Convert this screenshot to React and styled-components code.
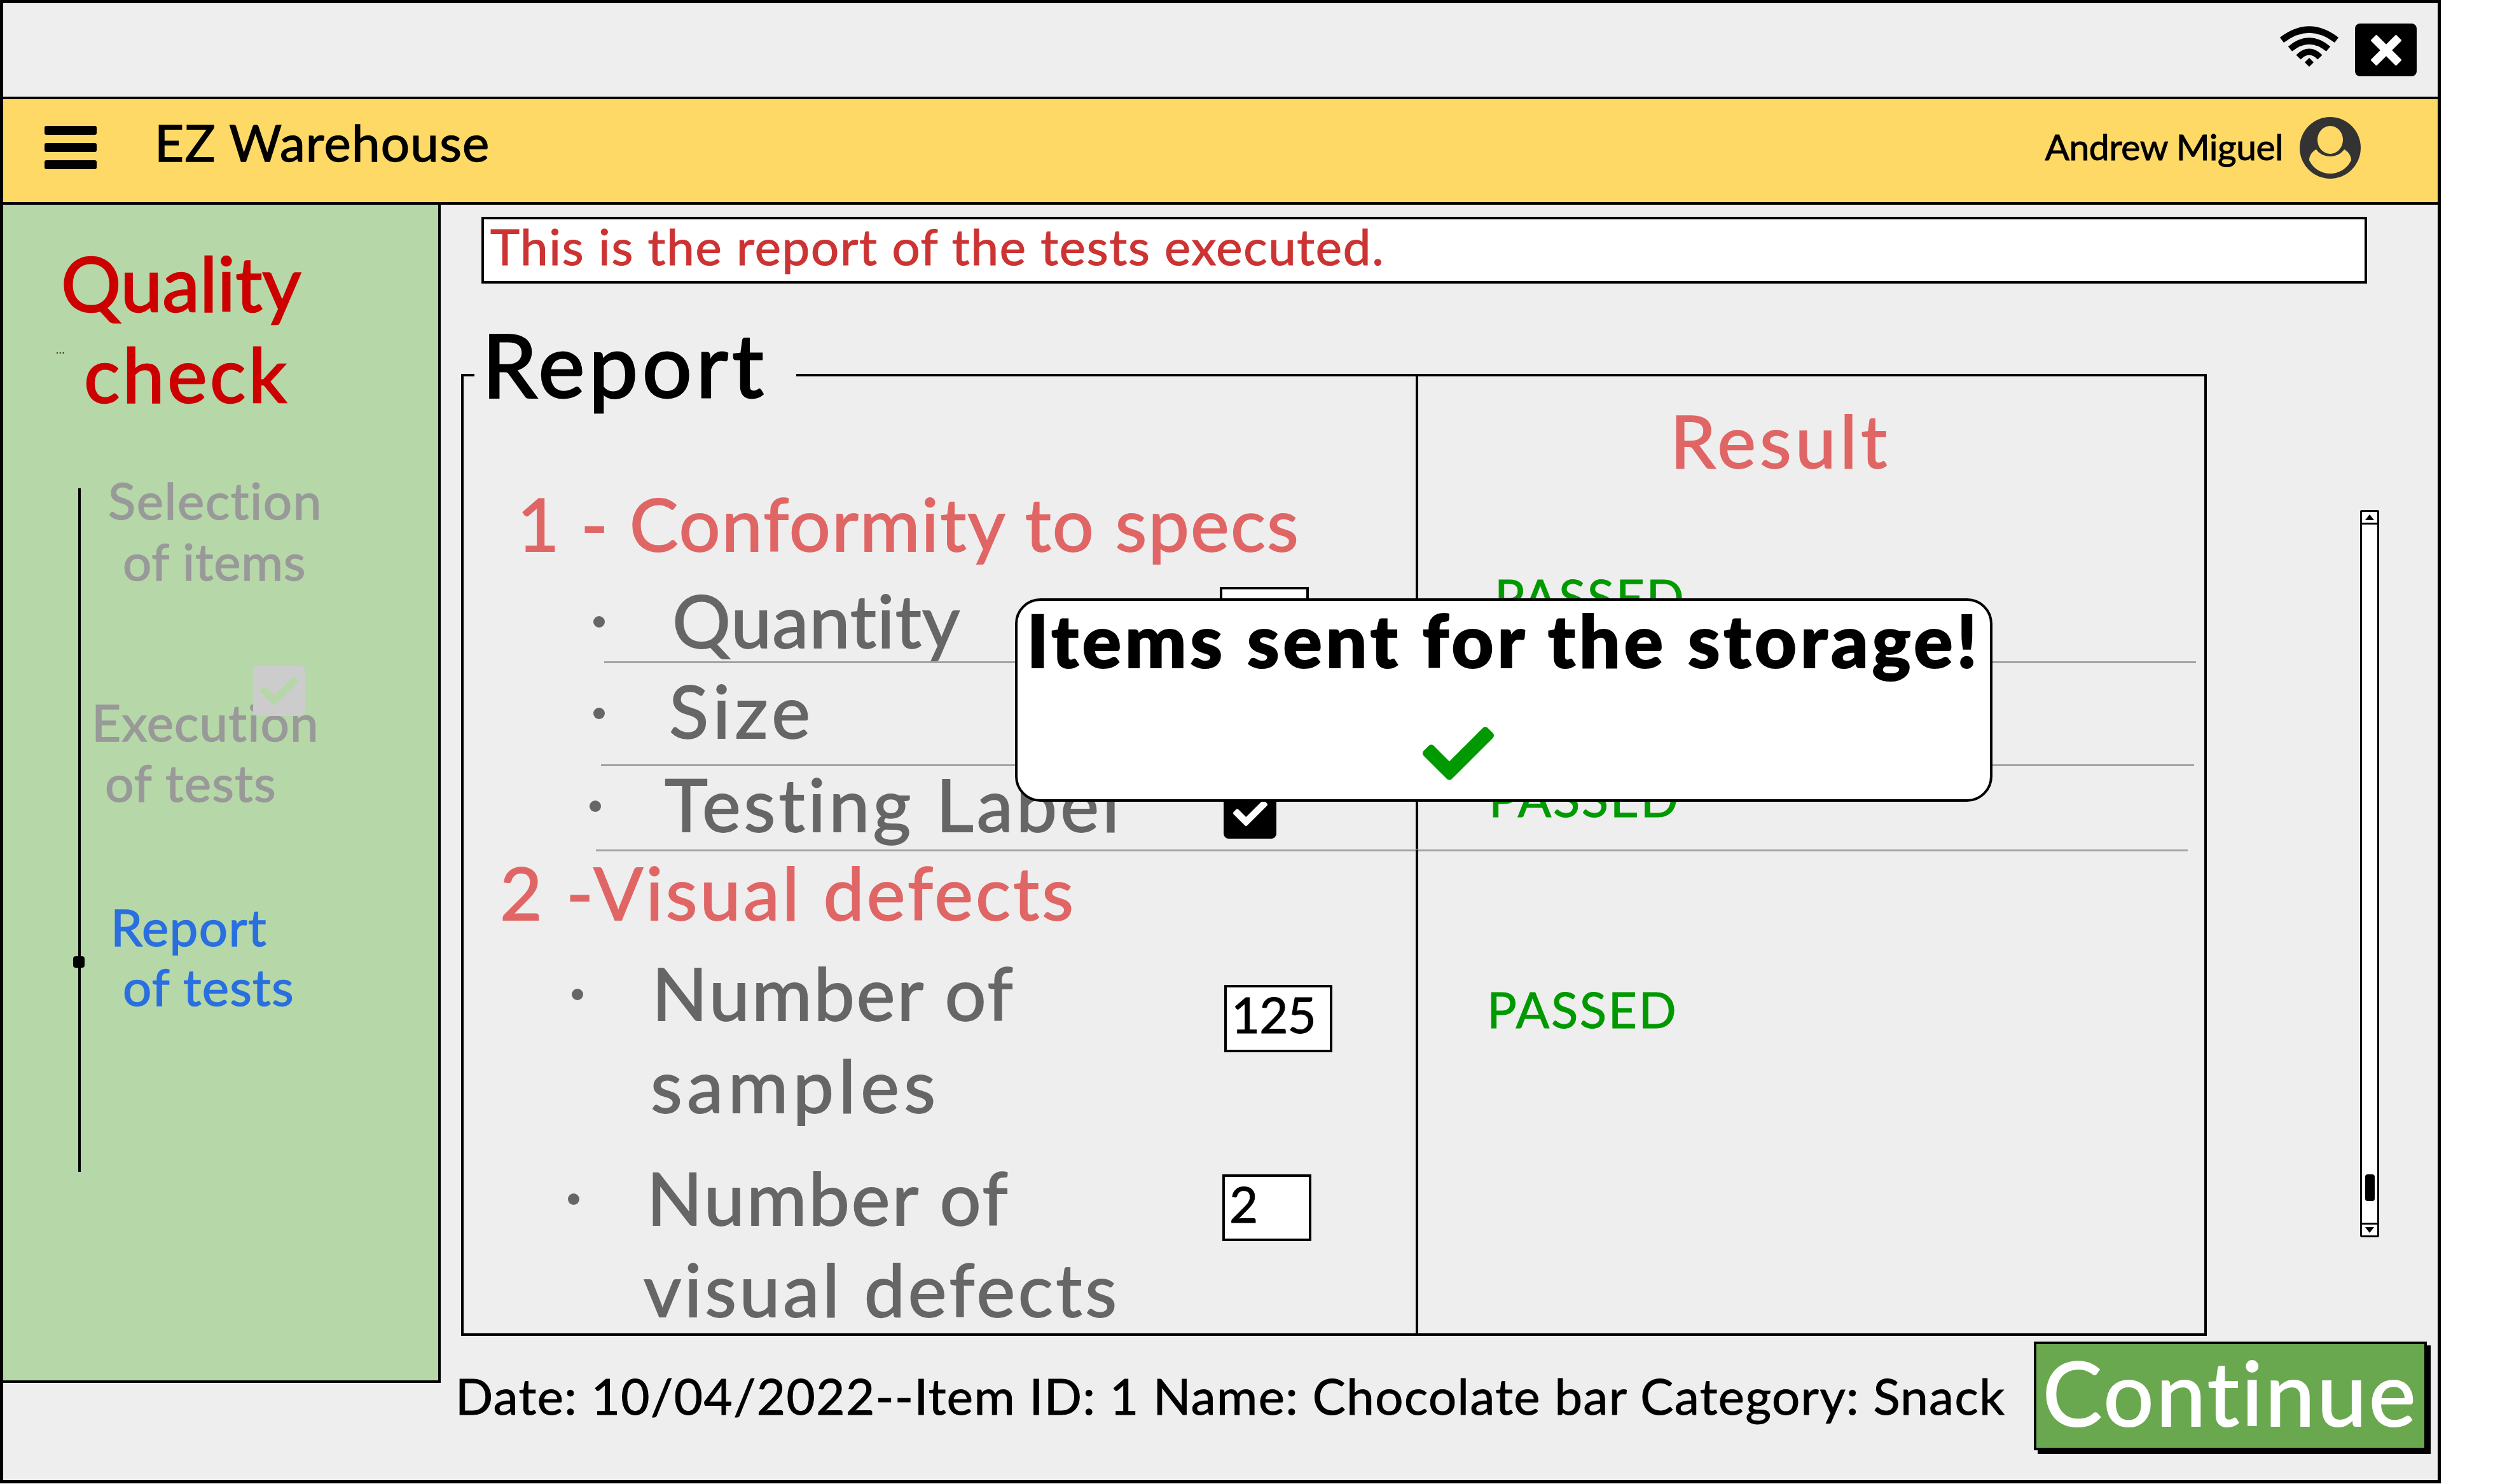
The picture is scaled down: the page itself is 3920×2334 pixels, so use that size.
import React from "react";
import styled, { createGlobalStyle } from "styled-components";
import { FaCheck } from "react-icons/fa";

const Global = createGlobalStyle`
  html, body { margin: 0; padding: 0; background: #fff; }
  body { font-family: "Lato", "Liberation Sans", sans-serif; }
  * { box-sizing: border-box; }
`;

const Window = styled.div`
  position: relative; width: 3838px; height: 2333px; background: #eeeeee;
  border: 5px solid #000; display: flex; flex-direction: column; overflow: hidden;
`;
const TitleBar = styled.div`
  height: 147px; flex: none; display: flex; align-items: flex-start; justify-content: flex-end;
  padding: 32px 33px 0 0;
`;
const Wifi = styled.svg`width: 94px; height: 66px; margin: 3px 25px 0 0;`;
const CloseButton = styled.div`
  width: 97px; height: 83px; background: #000; border-radius: 8px;
  display: flex; align-items: center; justify-content: center;
`;
const Header = styled.header`
  height: 170px; flex: none; background: #ffd966; border-top: 4px solid #000; border-bottom: 4px solid #000;
  display: flex; align-items: center; padding: 0 121px 0 65px;
`;
const Burger = styled.div`display: flex; flex-direction: column; gap: 13px; width: 82px; margin: -11px 91px 0 0;`;
const BurgerBar = styled.span`display: block; height: 14px; background: #000; border-radius: 3px;`;
const AppName = styled.div`
  font-size: 80px; line-height: 96px; color: #000; letter-spacing: 1.2px; margin-bottom: 28px;
  -webkit-text-stroke: 1.4px #000;
`;
const UserName = styled.div`
  font-size: 57px; line-height: 72px; color: #000; margin: 0 0 14px auto; letter-spacing: -0.5px;
  -webkit-text-stroke: 1px #000;
`;
const Avatar = styled.svg`width: 96px; height: 97px; margin: 0 0 10px 26px;`;

const Body = styled.div`flex: 1; display: flex; min-height: 0;`;
const Sidebar = styled.aside`
  position: relative; width: 688px; height: 1853px; flex: none; background: #b6d7a8;
  border-right: 4px solid #000; border-bottom: 4px solid #000; padding-top: 51px;
`;
const SideTitle = styled.div`
  font-size: 118px; line-height: 143px; color: #cc0000; margin-left: ${p => p.$left}px;
  letter-spacing: ${p => p.$ls}px; -webkit-text-stroke: 2.4px #cc0000;
`;
const Ellipsis = styled.span`position: absolute; left: 83px; top: 220px; font-size: 16px; line-height: 16px; color: #000; letter-spacing: 1px;`;
const SideNav = styled.nav`position: relative; display: flex; margin: 79px 0 0 118px;`;
const TimelineLine = styled.div`width: 4px; height: 1075px; margin-top: 30px; background: #000; flex: none;`;
const StepList = styled.div`display: flex; flex-direction: column;`;
const Step = styled.div`
  font-size: 80px; line-height: 96px; color: ${p => p.$color || "#999999"};
  margin-left: ${p => p.$left}px; margin-top: ${p => p.$top || 0}px; letter-spacing: ${p => p.$ls || 0.8}px;
  -webkit-text-stroke: 1.4px ${p => p.$color || "#999999"};
`;
const TimelineDot = styled.span`
  position: absolute; left: -8px; top: 766px; width: 18px; height: 18px; background: #000; border-radius: 4px;
`;
const DisabledCheck = styled.span`
  position: absolute; left: 275px; top: 309px; width: 82px; height: 79px; background: #cccccc; border-radius: 8px;
  display: flex; align-items: center; justify-content: center; color: #b6d7a8; font-size: 60px;
`;

const Main = styled.main`flex: 1; min-width: 0; padding-top: 19px;`;
const MessageBar = styled.div`
  width: 2965px; height: 105px; margin-left: 64px; background: #fff; border: 4px solid #000;
  padding-left: 10px; font-size: 78px; line-height: 84px; color: #cc3333; letter-spacing: 1.72px;
  -webkit-text-stroke: 1.2px #cc3333;
`;
const PanelRow = styled.div`display: flex; align-items: flex-start; margin: 142px 0 0 32px;`;
const Panel = styled.section`
  position: relative; width: 2745px; height: 1513px; border: 4px solid #000; flex: none;
`;
const PanelLegend = styled.h2`
  position: absolute; left: 17px; top: -89px; margin: 0; padding: 0 45px 0 12px; background: #eeeeee;
  font-size: 138px; line-height: 138px; font-weight: 400; color: #000; letter-spacing: 6.5px;
  -webkit-text-stroke: 3px #000;
`;
const Row = styled.div`
  position: relative; display: grid; grid-template-columns: 1501px 1fr; height: ${p => p.$h}px;
  ${p => p.$lineLeft !== undefined && `
    &::after {
      content: ""; position: absolute; left: ${p.$lineLeft}px; right: ${p.$lineRight}px; bottom: -2px;
      height: 3px; background: #a3a3a3;
    }
  `}
`;
const LeftCell = styled.div`
  display: flex; align-items: flex-start; border-right: 4px solid #000; min-width: 0;
`;
const RightCell = styled.div`min-width: 0;`;
const SectionHeading = styled.div`
  font-size: 115px; line-height: 138px; color: #e06666; letter-spacing: ${p => p.$ls}px;
  margin-left: ${p => p.$left}px; margin-top: ${p => p.$top}px; white-space: nowrap;
  -webkit-text-stroke: 1.8px #e06666;
`;
const Bullet = styled.span`
  width: 18px; height: 18px; border-radius: 50%; background: #666666; flex: none;
  margin-left: ${p => p.$left}px; margin-top: ${p => p.$top}px;
`;
const ItemLabel = styled.div`
  font-size: 115px; line-height: ${p => p.$lh || 145}px; color: #666666;
  margin-left: ${p => p.$left}px; margin-top: ${p => p.$top}px; white-space: nowrap;
  -webkit-text-stroke: 1.8px #666666;
`;
const LabelLine = styled.div`margin-left: ${p => p.$shift || 0}px; letter-spacing: ${p => p.$ls}px;`;
const InputBox = styled.div`
  width: ${p => p.$w}px; height: ${p => p.$h}px; flex: none; margin-left: auto;
  margin-right: ${p => p.$right}px; margin-top: ${p => p.$top}px;
  background: #fff; border: 4px solid #000; padding-left: 7px;
  font-size: 78px; line-height: 84px; color: #000; letter-spacing: -1px;
  -webkit-text-stroke: 1px #000;
`;
const CheckedBox = styled.div`
  width: 83px; height: 81px; flex: none; margin-left: auto; margin-right: 219px; margin-top: 35px;
  background: #000; border-radius: 8px; color: #fff; font-size: 54px;
  display: flex; align-items: center; justify-content: center;
`;
const Passed = styled.div`
  font-size: 78px; line-height: 94px; color: #009900; letter-spacing: 2.6px;
  margin-left: ${p => p.$left}px; margin-top: ${p => p.$top}px;
  -webkit-text-stroke: 1px #009900;
`;

const Scrollbar = styled.div`
  width: 30px; height: 1144px; margin: 214px 0 0 241px; flex: none; position: relative; background: #fff;
  border: 3px solid #000; border-radius: 3px; display: flex; flex-direction: column; justify-content: space-between;
`;
const ScrollButton = styled.div`
  height: 20px; display: flex; align-items: center; justify-content: center;
  ${p => (p.$bottom ? "border-top: 3px solid #000;" : "border-bottom: 3px solid #000;")}
`;
const ScrollArrow = styled.span`
  width: 0; height: 0; border-left: 7px solid transparent; border-right: 7px solid transparent;
  ${p => (p.$down ? "border-top: 9px solid #000;" : "border-bottom: 9px solid #000;")}
`;
const ScrollThumb = styled.span`
  position: absolute; left: 5px; bottom: 54px; width: 15px; height: 42px; background: #000; border-radius: 4px;
`;

const Footer = styled.div`display: flex; align-items: flex-start; margin-top: 9px;`;
const ItemInfo = styled.div`
  font-size: 78px; line-height: 94px; color: #000; margin: 38px 0 0 23px; white-space: nowrap; letter-spacing: 1.45px;
  -webkit-text-stroke: 1px #000;
`;
const ContinueButton = styled.button`
  width: 618px; height: 171px; margin: 0 17px 0 auto; padding: 0 0 14px; background: #6aa84f; border: 4px solid #000;
  box-shadow: 6px 6px 0 #000; color: #fff; font-family: inherit; font-size: 140px; line-height: 150px;
  letter-spacing: 3.5px; -webkit-text-stroke: 2px #fff;
`;

const Modal = styled.div`
  position: absolute; left: 1591px; top: 936px; width: 1537px; height: 320px; background: #fff;
  border: 4px solid #000; border-radius: 40px; display: flex; flex-direction: column; align-items: center; z-index: 2;
`;
const ModalTitle = styled.div`
  font-size: 115px; line-height: 138px; font-weight: 900; color: #000; margin-top: -9px; white-space: nowrap; letter-spacing: 5.6px;
  -webkit-text-stroke: 2px #000;
`;
const ModalIcon = styled.div`color: #009900; font-size: 112px; line-height: 0; margin: 55px 143px 0 0;`;

export default function App() {
  return (
    <>
      <Global />
      <Window>
        <TitleBar>
          <Wifi viewBox="0 0 94 66" fill="none" stroke="#000" strokeWidth="10">
            <path d="M4 23 Q47 -10 90 23" />
            <path d="M17 37 Q47 12 77 37" />
            <path d="M30 50 Q47 33 64 50" />
            <path d="M47 51 L54 58 L47 65 L40 58 Z" fill="#000" stroke="none" />
          </Wifi>
          <CloseButton>
            <svg width="48" height="48" viewBox="0 0 48 48" stroke="#fff" strokeWidth="13">
              <path d="M4 4 L44 44 M44 4 L4 44" />
            </svg>
          </CloseButton>
        </TitleBar>
        <Header>
          <Burger>
            <BurgerBar />
            <BurgerBar />
            <BurgerBar />
          </Burger>
          <AppName>EZ Warehouse</AppName>
          <UserName>Andrew Miguel</UserName>
          <Avatar viewBox="0 0 96 97">
            <ellipse cx="48" cy="48.5" rx="48" ry="48.5" fill="#333" />
            <ellipse cx="48" cy="36" rx="20" ry="22" fill="#ffd966" />
            <path d="M15 68 c0-8 6-15 11-17 c5 7 13 11 22 11 s17-4 22-11 c5 2 11 9 11 17 c-6 13-19 21-33 21 s-27-8-33-21z" fill="#ffd966" />
          </Avatar>
        </Header>
        <Body>
          <Sidebar>
            <SideTitle $left={91} $ls={0}>Quality</SideTitle>
            <SideTitle $left={127} $ls={4.5}>check</SideTitle>
            <Ellipsis>...</Ellipsis>
            <SideNav>
              <TimelineLine />
              <StepList>
                <Step $left={43} $ls={1.6}>Selection</Step>
                <Step $left={66}>of items</Step>
                <Step $left={17} $top={157} $ls={1.2}>Execution</Step>
                <Step $left={38} $top={-1} $ls={1.2}>of tests</Step>
                <Step $left={47} $color="#2a6fe0" $top={131} $ls={1.4}>Report</Step>
                <Step $left={66} $color="#2a6fe0" $top={-2} $ls={1.2}>of tests</Step>
              </StepList>
              <TimelineDot />
              <DisabledCheck><FaCheck /></DisabledCheck>
            </SideNav>
          </Sidebar>
          <Main>
            <MessageBar>This is the report of the tests executed.</MessageBar>
            <PanelRow>
              <Panel>
                <PanelLegend>Report</PanelLegend>
                <Row $h={288}>
                  <LeftCell><SectionHeading $left={84} $top={161} $ls={2.1}>1 - Conformity to specs</SectionHeading></LeftCell>
                  <RightCell><SectionHeading $left={396} $top={30} $ls={6}>Result</SectionHeading></RightCell>
                </Row>
                <Row $h={161} $lineLeft={221} $lineRight={13}>
                  <LeftCell>
                    <Bullet $left={204} $top={89} />
                    <ItemLabel $left={106} $top={25} $lh={138}><LabelLine $ls={1}>Quantity</LabelLine></ItemLabel>
                    <InputBox $w={140} $h={110} $right={168} $top={43} />
                  </LeftCell>
                  <RightCell><Passed $left={120} $top={11}>PASSED</Passed></RightCell>
                </Row>
                <Row $h={162} $lineLeft={216} $lineRight={16}>
                  <LeftCell>
                    <Bullet $left={204} $top={72} />
                    <ItemLabel $left={101} $top={6} $lh={138}><LabelLine $ls={7}>Size</LabelLine></ItemLabel>
                  </LeftCell>
                  <RightCell />
                </Row>
                <Row $h={134} $lineLeft={208} $lineRight={26}>
                  <LeftCell>
                    <Bullet $left={198} $top={56} />
                    <ItemLabel $left={100} $top={-9} $lh={138}><LabelLine $ls={5}>Testing Label</LabelLine></ItemLabel>
                    <CheckedBox><FaCheck /></CheckedBox>
                  </LeftCell>
                  <RightCell><Passed $left={111} $top={5}>PASSED</Passed></RightCell>
                </Row>
                <Row $h={133}>
                  <LeftCell><SectionHeading $left={57} $top={-4} $ls={4}>2 -Visual defects</SectionHeading></LeftCell>
                  <RightCell />
                </Row>
                <Row $h={320}>
                  <LeftCell>
                    <Bullet $left={170} $top={85} />
                    <ItemLabel $left={108} $top={18}>
                      <LabelLine $ls={3}>Number of</LabelLine>
                      <LabelLine $shift={-2} $ls={7.4}>samples</LabelLine>
                    </ItemLabel>
                    <InputBox $w={170} $h={106} $right={131} $top={79}>125</InputBox>
                  </LeftCell>
                  <RightCell><Passed $left={108} $top={70}>PASSED</Passed></RightCell>
                </Row>
                <Row $h={295}>
                  <LeftCell>
                    <Bullet $left={164} $top={87} />
                    <ItemLabel $left={106} $top={20} $lh={144}>
                      <LabelLine $ls={3}>Number of</LabelLine>
                      <LabelLine $shift={-5} $ls={4.6}>visual defects</LabelLine>
                    </ItemLabel>
                    <InputBox $w={140} $h={105} $right={164} $top={57}>2</InputBox>
                  </LeftCell>
                  <RightCell />
                </Row>
              </Panel>
              <Scrollbar>
                <ScrollButton><ScrollArrow /></ScrollButton>
                <ScrollThumb />
                <ScrollButton $bottom><ScrollArrow $down /></ScrollButton>
              </Scrollbar>
            </PanelRow>
            <Footer>
              <ItemInfo>Date: 10/04/2022--Item ID: 1 Name: Chocolate bar Category: Snack</ItemInfo>
              <ContinueButton>Continue</ContinueButton>
            </Footer>
          </Main>
        </Body>
        <Modal>
          <ModalTitle>Items sent for the storage!</ModalTitle>
          <ModalIcon><FaCheck /></ModalIcon>
        </Modal>
      </Window>
    </>
  );
}
